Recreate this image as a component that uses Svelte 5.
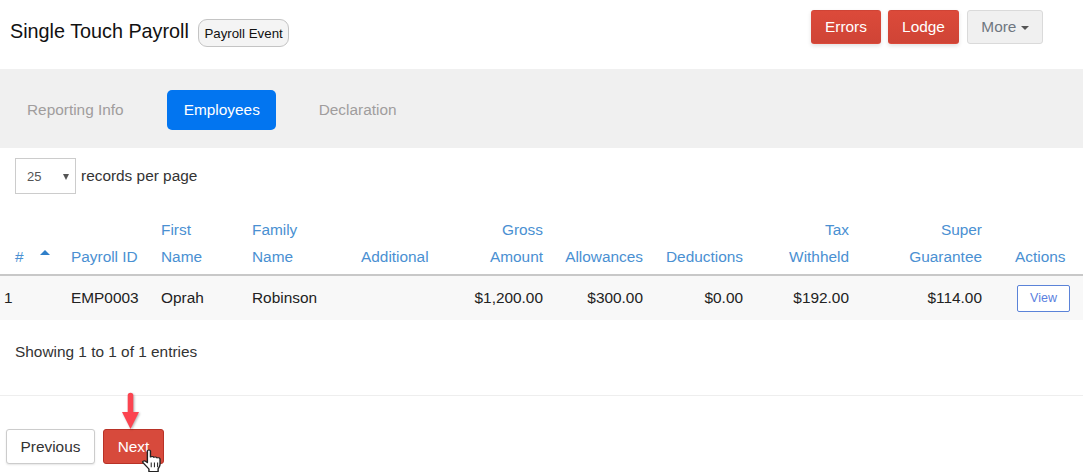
<script>
  const columns = [
    { top: '#', width: 61, cls: 'sortcol' },
    { top: 'Payroll ID', width: 90 },
    { over: 'First', top: 'Name', width: 91 },
    { over: 'Family', top: 'Name', width: 109 },
    { top: 'Additional', width: 90 },
    { over: 'Gross', top: 'Amount', width: 112, cls: 'num' },
    { top: 'Allowances', width: 100, cls: 'num' },
    { top: 'Deductions', width: 100, cls: 'num' },
    { over: 'Tax', top: 'Withheld', width: 106, cls: 'num' },
    { over: 'Super', top: 'Guarantee', width: 133, cls: 'num' },
    { top: 'Actions', width: 91, cls: 'act' }
  ];
  const row = ['1', 'EMP0003', 'Oprah', 'Robinson', '', '$1,200.00', '$300.00', '$0.00', '$192.00', '$114.00'];
</script>

<div class="page">
  <header>
    <div class="title">
      <h1>Single Touch Payroll</h1>
      <span class="badge">Payroll Event</span>
    </div>
    <div class="actions">
      <button class="btn red">Errors</button>
      <button class="btn red">Lodge</button>
      <button class="btn grey">More <i class="caret"></i></button>
    </div>
  </header>

  <nav>
    <span class="tab">Reporting Info</span>
    <span class="tab active">Employees</span>
    <span class="tab">Declaration</span>
  </nav>

  <div class="length">
    <div class="select">25<i class="down"></i></div>
    <span>records per page</span>
  </div>

  <table>
    <colgroup>
      {#each columns as c}
        <col style="width:{c.width}px" />
      {/each}
    </colgroup>
    <thead>
      <tr>
        {#each columns as c}
          <th class={c.cls}>
            {#if c.over}{c.over}<br />{/if}{c.top}
            {#if c.cls === 'sortcol'}<i class="sort"></i>{/if}
          </th>
        {/each}
      </tr>
    </thead>
    <tbody>
      <tr>
        {#each row as cell, i}
          <td class={columns[i].cls}>{cell}</td>
        {/each}
        <td class="act"><button class="view">View</button></td>
      </tr>
    </tbody>
  </table>

  <p class="info">Showing 1 to 1 of 1 entries</p>

  <footer>
    <button class="btn prev">Previous</button>
    <div class="next-wrap">
      <button class="btn next">Next</button>
      <svg class="arrow" width="17" height="36" viewBox="0 0 17 36">
        <path d="M5.700 2.500a2.800 2.800 0 0 1 5.600 0V19H17L8.500 36 0 19h5.700z" fill="#fb4450" />
      </svg>
      <svg class="hand" width="23" height="23" viewBox="0 0 18 24" preserveAspectRatio="none">
        <path d="M5 2.200c0-1.500 2.400-1.500 2.400 0v6.200c.8-.9 2.200-.7 2.600.3.800-.7 2.200-.4 2.500.6 1-.6 2.300 0 2.400 1.200v5.500c0 2-.8 3.200-1.500 4.600v3H6.200v-2.800L1.700 14.500c-1-1.400.6-2.800 1.900-1.700L5 14.200z" fill="#fff" stroke="#222" stroke-width="1.100" stroke-linejoin="round" />
        <path d="M8 14v5M10.500 14v5M13 14v5" stroke="#222" stroke-width="0.800" fill="none" />
      </svg>
    </div>
  </footer>
</div>

<style>
  :global(body) {
    margin: 0;
    background: #fff;
  }
  .page {
    font-family: "Liberation Sans", Arial, sans-serif;
    font-size: 15.4px;
    color: #333;
    height: 472px;
    overflow: hidden;
  }
  header {
    height: 69px;
    display: flex;
    justify-content: space-between;
    box-sizing: border-box;
    padding: 10px 40px 0 10px;
  }
  .title {
    display: flex;
    align-items: flex-start;
    gap: 9px;
    padding-top: 9px;
  }
  h1 {
    margin: 0;
    font-size: 19.8px;
    font-weight: 400;
    line-height: 24px;
    color: #111;
  }
  .badge {
    box-sizing: border-box;
    height: 28px;
    padding: 0 5.5px;
    line-height: 27px;
    font-size: 13.3px;
    color: #111;
    background: #f4f4f4;
    border: 1px solid #c4c4c4;
    border-radius: 9px;
  }
  .actions {
    display: flex;
    gap: 7px;
    align-items: flex-start;
  }
  .btn {
    font: inherit;
    box-sizing: border-box;
    height: 34px;
    border-radius: 3px;
    border: 1px solid transparent;
    cursor: pointer;
  }
  .red {
    width: 70px;
    color: #fff;
    background: linear-gradient(#dc4a3a, #cf4436);
    box-shadow: 0 2px 4px rgba(0, 0, 0, 0.12);
  }
  .red + .red {
    width: 71px;
  }
  .grey {
    width: 76px;
    margin-left: 1px;
    color: #6f7780;
    background: #f0f0f0;
    border-color: #dadada;
  }
  .caret {
    display: inline-block;
    vertical-align: 2px;
    border-top: 4px solid #555;
    border-left: 4px solid transparent;
    border-right: 4px solid transparent;
  }
  nav {
    height: 79px;
    background: #f0f0f0;
    box-sizing: border-box;
    padding: 21px 10px 0;
    display: flex;
    gap: 26px;
  }
  .tab {
    box-sizing: border-box;
    height: 40px;
    line-height: 40px;
    padding: 0 17px;
    color: #a09d9d;
  }
  .active {
    width: 109px;
    color: #fff;
    background: #0275f0;
    border-radius: 5px;
  }
  .length {
    display: flex;
    align-items: center;
    gap: 5px;
    padding: 10px 15px 0;
    height: 36px;
  }
  .select {
    box-sizing: border-box;
    width: 61px;
    height: 36px;
    line-height: 36px;
    padding-left: 11px;
    font-size: 13px;
    color: #555;
    border: 1px solid #ccc;
    position: relative;
  }
  .down {
    position: absolute;
    right: 6px;
    top: 15px;
    border-top: 6px solid #555;
    border-left: 3px solid transparent;
    border-right: 3px solid transparent;
  }
  table {
    table-layout: fixed;
    width: 1083px;
    border-collapse: collapse;
    margin-top: 17px;
  }
  th {
    font-weight: 400;
    color: #4a90d2;
    text-align: left;
    vertical-align: bottom;
    line-height: 27px;
    padding: 0 10px 4px;
    height: 64px;
    border-bottom: 2px solid #c8c8c8;
    box-sizing: border-box;
  }
  .sortcol {
    position: relative;
    padding-left: 15px;
  }
  .sort {
    position: absolute;
    left: 40px;
    top: 39px;
    border-bottom: 5px solid #2f7fc9;
    border-left: 5px solid transparent;
    border-right: 5px solid transparent;
  }
  td {
    height: 45px;
    padding: 0 10px;
    background: #f8f8f8;
    color: #222;
    box-sizing: border-box;
  }
  td.sortcol {
    padding-left: 4px;
  }
  .num {
    text-align: right;
  }
  th.act {
    padding: 0 0 4px 23px;
  }
  td.act {
    padding: 0 0 0 25px;
  }
  .view {
    display: block;
    box-sizing: border-box;
    width: 53px;
    height: 27px;
    padding: 0;
    font: inherit;
    font-size: 12.5px;
    color: #5b7fe0;
    background: #fff;
    border: 1px solid #5b83d8;
    border-radius: 2px;
  }
  .info {
    margin: 0;
    padding: 23px 15px 0;
    line-height: 18px;
    height: 52px;
  }
  footer {
    border-top: 1px solid #eee;
    display: flex;
    gap: 8px;
    padding: 33px 0 0 6px;
  }
  .prev {
    width: 89px;
    height: 35px;
    color: #333;
    background: #fff;
    border-color: #ccc;
    box-shadow: 0 1px 2px rgba(0, 0, 0, 0.1);
  }
  .next-wrap {
    position: relative;
  }
  .next {
    width: 61px;
    height: 35px;
    color: #fff;
    background: #d74a3c;
    border-color: #b83227;
  }
  .arrow {
    position: absolute;
    left: 19px;
    top: -36px;
    overflow: visible;
    filter: drop-shadow(1px 1px 1px rgba(0, 0, 0, 0.3));
  }
  .hand {
    position: absolute;
    left: 38px;
    top: 20px;
  }
</style>
